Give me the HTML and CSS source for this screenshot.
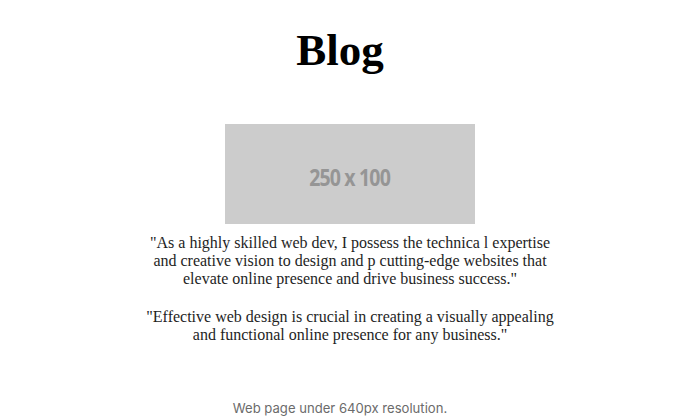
FILE: index.html
```html
<!DOCTYPE html>
<html>
<head>
<meta charset="utf-8">
<link rel="stylesheet" href="styles.css">
</head>
<body>
<figure class="figure">
  <div class="shot">
    <h1 class="title">Blog</h1>
    <div class="placeholder"><span>250 x 100</span></div>
    <p class="quote">"As a highly skilled web dev, I possess the technica l expertise and creative vision to design and p cutting-edge websites that elevate online presence and drive business success."</p>
    <p class="quote">"Effective web design is crucial in creating a visually appealing and functional online presence for any business."</p>
  </div>
  <figcaption class="caption">Web page under 640px resolution.</figcaption>
</figure>
</body>
</html>
```
FILE: styles.css
```css
html, body {
  margin: 0;
  padding: 0;
  background: #ffffff;
}
.figure {
  margin: 0;
  width: 680px;
  height: 416px;
  display: flex;
  flex-direction: column;
  align-items: center;
}
.shot {
  width: 680px;
  display: flex;
  flex-direction: column;
  align-items: center;
  font-family: "Liberation Serif", "Times New Roman", serif;
  color: #1e1e1e;
}
.title {
  margin: 22px 0 0 0;
  font-size: 45px;
  line-height: 56px;
  font-weight: bold;
  color: #000000;
}
.placeholder {
  margin: 46px 0 0 20px;
  width: 250px;
  height: 100px;
  background: #cccccc;
  display: flex;
  align-items: center;
  justify-content: center;
}
.placeholder span {
  font-family: "Open Sans", "DejaVu Sans", sans-serif;
  font-weight: 700;
  font-size: 23px;
  letter-spacing: -1px;
  color: #959595;
  transform: scaleX(0.85);
  margin-top: 6px;
}
.quote {
  width: 420px;
  margin: 10px 0 0 20px;
  font-size: 16px;
  line-height: 18px;
  text-align: center;
}
.quote + .quote {
  margin-top: 20px;
}
.caption {
  margin-top: 54px;
  font-family: "Inter", "Liberation Sans", sans-serif;
  font-size: 13.1px;
  line-height: 20px;
  color: #6b6b6b;
}
```
